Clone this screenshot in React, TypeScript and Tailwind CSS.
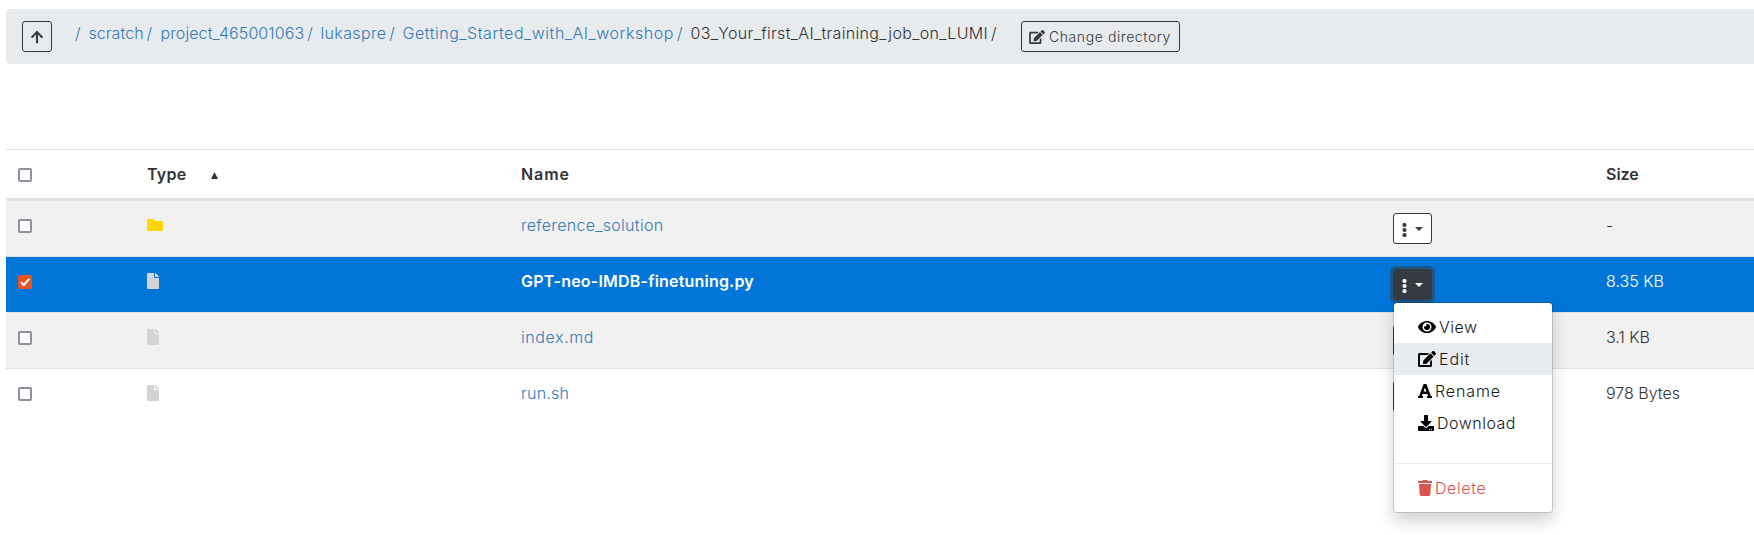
import {
  FaArrowUp,
  FaDownload,
  FaEdit,
  FaEye,
  FaFile,
  FaFolder,
  FaFont,
  FaTrash,
} from 'react-icons/fa';

const crumbs = [
  { label: 'scratch', box: 'w-[72px]', text: 'tracking-[0.05px]' },
  { label: 'project_465001063', box: 'w-[160px]', text: 'tracking-[0.1px]' },
  { label: 'lukaspre', box: 'w-[82px]', text: 'tracking-[0.35px]' },
  { label: 'Getting_Started_with_AI_workshop', box: 'w-[288px]', text: 'tracking-[0.53px]' },
];

const files = [
  { name: 'reference_solution', size: '-', folder: true, tracking: 'tracking-[0.3px]' },
  { name: 'GPT-neo-IMDB-finetuning.py', size: '8.35 KB', selected: true, tracking: 'tracking-[0.2px]' },
  { name: 'index.md', size: '3.1 KB', striped: true, tracking: 'tracking-[0.6px]' },
  { name: 'run.sh', size: '978 Bytes', tracking: 'tracking-[0.25px]' },
];

const columns = 'grid grid-cols-[129px_374px_872px_213px_1fr] pl-3';

function Checkbox({ checked = false }: { checked?: boolean }) {
  if (checked) {
    return (
      <span className="flex size-3.5 items-center justify-center rounded-[2px] bg-[#e95420]">
        <svg viewBox="0 0 14 14" className="size-3.5" fill="none" stroke="white" strokeWidth="2">
          <path d="M3 7.2 5.8 10 11.3 3.8" />
        </svg>
      </span>
    );
  }
  return <span className="block size-3.5 rounded-[2px] border-2 border-[#8f8f9d] bg-white" />;
}

function Menu() {
  const item = 'flex h-8 items-center pl-6 leading-6';
  return (
    <div className="absolute top-[33px] left-0 z-10 h-[211px] w-[160px] rounded border border-black/15 bg-white bg-clip-padding pt-2 text-[16px] text-[#16181b] shadow-[0_8px_16px_rgba(0,0,0,0.175)]">
      <div className={item}>
        <FaEye className="mr-[3px] h-4 w-[18px] text-black" />
        <span className="tracking-[0.5px]">View</span>
      </div>
      <div className={`${item} bg-[#e9ecef]`}>
        <FaEdit className="mr-[3px] h-4 w-[18px] text-black" />
        <span className="tracking-[0.9px]">Edit</span>
      </div>
      <div className={item}>
        <FaFont className="mr-[3px] h-4 w-[14px] text-black" />
        <span className="tracking-[0.9px]">Rename</span>
      </div>
      <div className={item}>
        <FaDownload className="mr-[3px] size-4 text-black" />
        <span className="tracking-[0.5px]">Download</span>
      </div>
      <div className="mt-6 mb-2 h-px bg-[#e9ecef]" />
      <div className={`${item} text-[#d9534f]`}>
        <FaTrash className="mr-[3px] h-4 w-[14px]" />
        <span className="tracking-[0.6px]">Delete</span>
      </div>
    </div>
  );
}

export default function App() {
  return (
    <div className="h-[535px] overflow-hidden bg-white pt-[9px] pl-1.5 font-['Inter',sans-serif] text-[16px] leading-6 font-light text-[#333333]">
      <nav className="flex h-[55px] items-start rounded-l bg-[#e8ebee] pt-3 pl-4">
        <button className="flex h-[31px] w-[30px] items-center justify-center rounded-[3px] border border-[#343a40] text-[#343a40]">
          <FaArrowUp className="size-3.5" />
        </button>
        <div className="ml-[23px] flex text-[#337ab7]">
          <span className="w-[13.5px]">/</span>
          {crumbs.map((c) => (
            <span key={c.label} className={`flex ${c.box}`}>
              <span className={c.text}>{c.label}</span>
              <span className="ml-[3px]">/</span>
            </span>
          ))}
          <span className="flex w-[330.5px] text-[#333333]">
            <span className="tracking-[0.33px]">03_Your_first_AI_training_job_on_LUMI</span>
            <span className="ml-[3px]">/</span>
          </span>
        </div>
        <button className="flex h-[31px] w-[159px] items-center rounded-[3px] border border-[#343a40] pl-[7px] text-[14px] text-[#343a40]">
          <FaEdit className="mr-[4px] h-3.5 w-4" />
          <span className="tracking-[0.58px] whitespace-nowrap">Change directory</span>
        </button>
      </nav>

      <section className="mt-[85px]">
        <header className={`${columns} h-[52px] border-t border-b-3 border-t-[#dee2e6] border-b-[#dee2e6] pt-3 font-semibold`}>
          <div className="pt-[6px]">
            <Checkbox />
          </div>
          <div className="flex">
            <span className="w-[64px] tracking-[0.3px]">Type</span>
            <svg viewBox="0 0 7 7" className="mt-[10px] size-[7px]" fill="#333333">
              <path d="M3.5 0 7 7H0Z" />
            </svg>
          </div>
          <div className="tracking-[0.9px]">Name</div>
          <div />
          <div>Size</div>
        </header>

        {files.map((f, i) => (
          <div
            key={f.name}
            className={`${columns} ${i === 0 ? 'h-[55px] pt-3' : 'h-14 border-t border-[#dee2e6] pt-3'} ${
              f.selected ? 'bg-[#0275d8] text-white' : f.folder || f.striped ? 'bg-[#f1f1f1]' : ''
            }`}
          >
            <div className="pt-[6px]">
              <Checkbox checked={f.selected} />
            </div>
            <div className="pt-1">
              {f.folder ? (
                <FaFolder className="size-4 text-[#ffd700]" />
              ) : (
                <FaFile className="h-4 w-3 text-[#d3d3d3]" />
              )}
            </div>
            <div className={`${f.tracking} ${f.selected ? 'font-semibold' : 'text-[#337ab7]'}`}>{f.name}</div>
            <div className="relative h-[31px] w-[39px]">
              <button
                className={`flex h-[31px] w-[39px] items-center rounded-[3px] border border-[#343a40] pl-[8px] ${
                  f.selected
                    ? 'bg-[#343a40] text-white shadow-[0_0_0_3px_rgba(52,58,64,0.5)]'
                    : 'bg-white text-[#343a40]'
                }`}
              >
                <svg viewBox="0 0 5 14" className="mt-[2px] h-[14px] w-[5px]" fill="currentColor">
                  <circle cx="2.5" cy="2" r="2.1" />
                  <circle cx="2.5" cy="7" r="2.1" />
                  <circle cx="2.5" cy="12" r="2.1" />
                </svg>
                <svg viewBox="0 0 8 4" className="ml-[8px] h-[4px] w-[8px]" fill="currentColor">
                  <path d="M0 0H8L4 4Z" />
                </svg>
              </button>
              {f.selected && <Menu />}
            </div>
            <div>{f.size}</div>
          </div>
        ))}
      </section>
    </div>
  );
}
